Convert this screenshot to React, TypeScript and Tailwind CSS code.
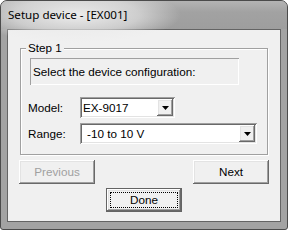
import React from 'react';

const raised =
  'shadow-[inset_-1px_-1px_0_#696969,inset_1px_1px_0_#ffffff,inset_-2px_-2px_0_#a0a0a0,inset_2px_2px_0_#e3e3e3]';
const sunken =
  'shadow-[inset_1px_1px_0_#a0a0a0,inset_-1px_-1px_0_#ffffff,inset_2px_2px_0_#696969,inset_-2px_-2px_0_#e3e3e3]';

function DropArrow() {
  return (
    <div className={`w-[16px] h-full bg-[#f0f0f0] flex items-center justify-center ${raised}`}>
      <svg width="7" height="4" viewBox="0 0 7 4">
        <path d="M0 0h7L3.5 4z" fill="#000" />
      </svg>
    </div>
  );
}

function Combo({ value, width, textPad }: { value: string; width: string; textPad: string }) {
  return (
    <div className={`${width} h-[21px] bg-white p-[2px] flex ${sunken}`}>
      <div className={`flex-1 flex items-center ${textPad} text-black`}>{value}</div>
      <DropArrow />
    </div>
  );
}

function Button({ label, disabled, isDefault }: { label: string; disabled?: boolean; isDefault?: boolean }) {
  if (isDefault) {
    return (
      <div className="w-[76px] h-[24px] border border-[#646464] bg-[#f0f0f0]">
        <div className={`w-full h-full p-[3px] ${raised}`}>
          <div className="w-full h-full border border-dotted border-black flex items-center justify-center">
            {label}
          </div>
        </div>
      </div>
    );
  }
  return (
    <div
      className={`w-[76px] h-[24px] bg-[#f0f0f0] flex items-center justify-center ${raised} ${
        disabled ? 'text-[#a0a0a0]' : 'text-black'
      }`}
    >
      {label}
    </div>
  );
}

export default function App() {
  return (
    <div className="w-[288px] h-[230px] bg-white">
      <div className="w-full h-full rounded-t-[7px] rounded-b-[3px] border border-[#4b4b4b] bg-[#a3a3a3] flex flex-col overflow-hidden">
        {/* Title bar */}
        <div className="h-[28px] flex items-center relative bg-[linear-gradient(#b4b4b4,#a2a2a2_40%,#9e9e9e)]">
          <div className="absolute left-[-30px] top-[-14px] w-[210px] h-[56px] bg-[radial-gradient(closest-side,rgba(240,240,240,0.95),rgba(235,235,235,0.6)_60%,transparent)]" />
          <span className="relative pl-[7px] text-[11.6px] text-black [font-family:'Noto_Sans',sans-serif] leading-none">
            Setup device - [EX001]
          </span>
        </div>
        {/* Client */}
        <div className="flex-1 px-[6px] pb-[7px]">
          <div className="w-full h-full border border-[#646464] bg-[#f0f0f0] px-[11px] pt-[18px] text-[11.7px] text-black [font-family:'Liberation_Sans',sans-serif] flex flex-col">
            {/* Group box */}
            <div className="relative mx-[1px] h-[107px] border border-[#a0a0a0] shadow-[inset_1px_1px_0_#fff,1px_1px_0_#fff] pt-[9px] px-[9px]">
              <span className="absolute -top-[8px] left-[5px] bg-[#f0f0f0] px-[2px] leading-[14px]">Step 1</span>
              <div className="w-[209px] h-[27px] flex items-center pl-[3px] shadow-[inset_1px_1px_0_#a0a0a0,inset_-1px_-1px_0_#ffffff]">
                Select the device configuration:
              </div>
              <div className="mt-[12px] flex items-center">
                <span className="w-[52px] -ml-[2px]">Model:</span>
                <Combo value="EX-9017" width="w-[95px]" textPad="pl-[1px]" />
              </div>
              <div className="mt-[5px] flex items-center">
                <span className="w-[52px] -ml-[2px]">Range:</span>
                <Combo value="-10 to 10 V" width="w-[177px]" textPad="pl-[5px]" />
              </div>
            </div>
            <div className="mt-[5px] flex justify-between">
              <Button label="Previous" disabled />
              <Button label="Next" />
            </div>
            <div className="mt-[4px] flex justify-center">
              <Button label="Done" isDefault />
            </div>
          </div>
        </div>
      </div>
    </div>
  );
}
